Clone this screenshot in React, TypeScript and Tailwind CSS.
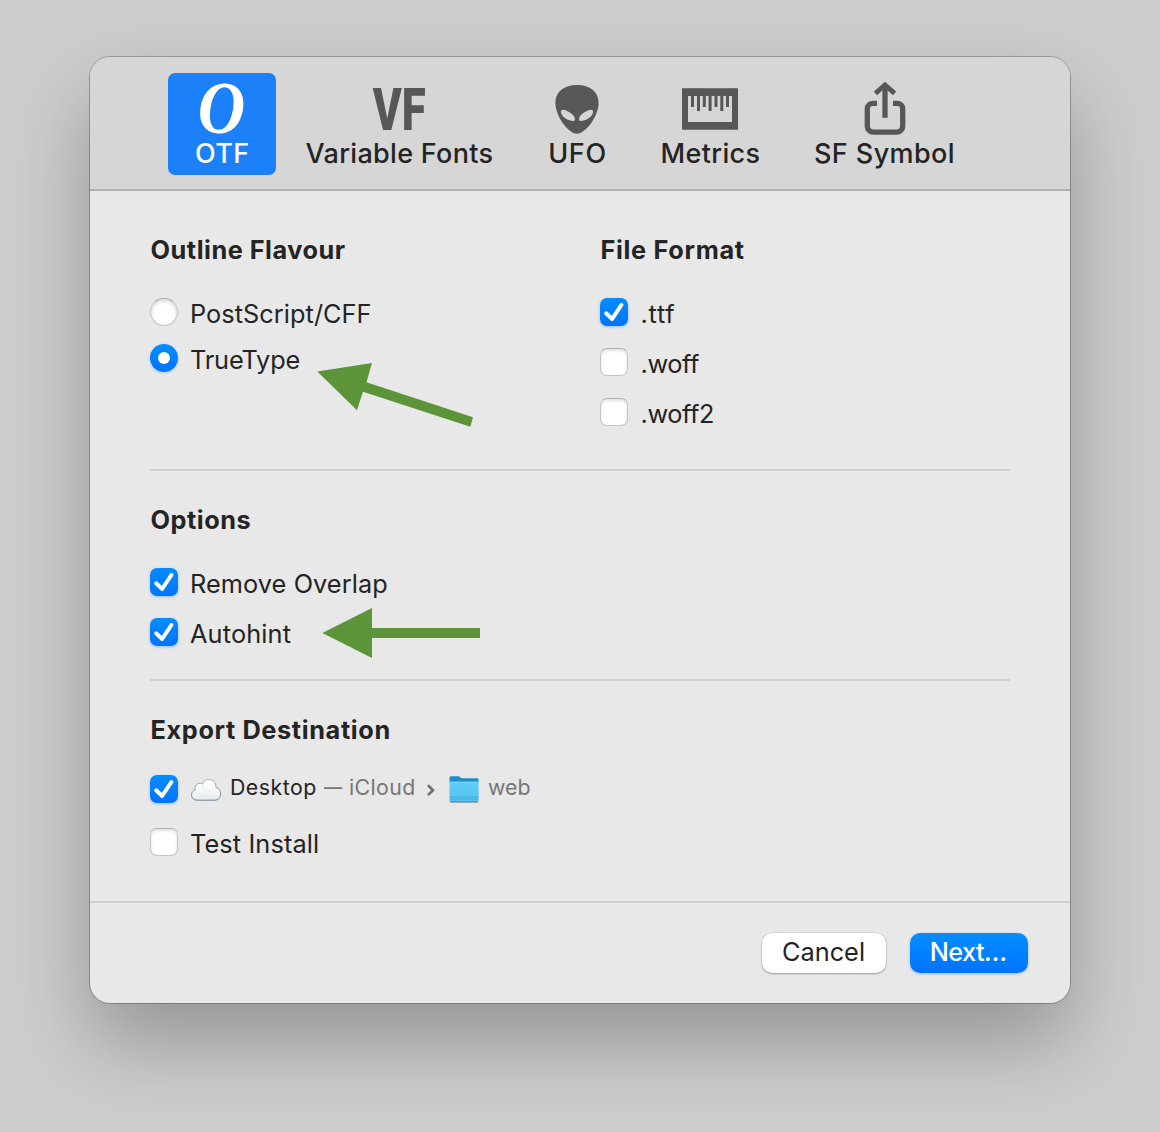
import React from "react";

function CheckMark() {
  return (
    <svg width="28" height="28" viewBox="0 0 28 28" fill="none">
      <path
        d="M6.2 15.3 L12.1 21 L21.4 7"
        stroke="#fff"
        strokeWidth="4"
        strokeLinecap="round"
        strokeLinejoin="round"
      />
    </svg>
  );
}

function Box({ checked = false }: { checked?: boolean }) {
  return checked ? (
    <span className="block h-7 w-7 shrink-0 rounded-[7px] bg-gradient-to-b from-[#078dff] to-[#0073fd] shadow-[0_1px_3px_rgba(0,110,255,0.35)]">
      <CheckMark />
    </span>
  ) : (
    <span className="block h-7 w-7 shrink-0 rounded-[7px] border border-[#c4c4c4] border-t-[#b0b0b0] bg-white shadow-[inset_0_2px_3px_rgba(0,0,0,0.12)]" />
  );
}

function Radio({ selected = false }: { selected?: boolean }) {
  return selected ? (
    <span className="flex h-7 w-7 shrink-0 items-center justify-center rounded-full bg-gradient-to-b from-[#078dff] to-[#0073fd] shadow-[0_1px_3px_rgba(0,110,255,0.3)]">
      <span className="h-3 w-3 rounded-full bg-white" />
    </span>
  ) : (
    <span className="block h-7 w-7 shrink-0 rounded-full border border-[#c4c4c4] border-t-[#a8a8a8] bg-white shadow-[inset_0_2px_4px_rgba(0,0,0,0.16)]" />
  );
}

function Row({ control, className = "", children }: { control: React.ReactNode; className?: string; children: React.ReactNode }) {
  return (
    <div className="flex h-8 items-start gap-3 whitespace-nowrap text-[25.3px] leading-8">
      {control}
      <span className={className}>{children}</span>
    </div>
  );
}

function Heading({ className = "", children }: { className?: string; children: React.ReactNode }) {
  return (
    <h2 className={`h-8 whitespace-nowrap pl-[0.5px] text-[25.3px] font-bold leading-8 ${className}`}>{children}</h2>
  );
}

function Tab({ width, label, className = "", children }: { width: string; label: string; className?: string; children: React.ReactNode }) {
  return (
    <div className={`flex h-[102px] flex-col items-center ${width}`}>
      <div className="flex h-[65px] items-start justify-center text-[#575757]">{children}</div>
      <div className={`h-8 whitespace-nowrap pl-px text-[27px] font-medium leading-8 ${className}`}>{label}</div>
    </div>
  );
}

function AlienIcon() {
  return (
    <svg className="mt-3" width="44" height="49" viewBox="0 0 44 49">
      <path
        fill="currentColor"
        fillRule="evenodd"
        d="M22 0C35 0 43.6 6.8 43.6 17.8C43.6 31.5 30.5 48.8 22 48.8C13.500 48.8 .4 31.5 .4 17.800C.4 6.800 9 0 22 0ZM6.200 25.600C4.800 27.800 8.700 35.700 18.600 36C20.600 36 20.300 32.800 18.400 30.600C15.600 27.400 8.200 23 6.200 25.600ZM37.800 25.600C35.800 23 28.400 27.400 25.600 30.600C23.700 32.800 23.400 36 25.400 36C35.300 35.700 39.200 27.800 37.800 25.600Z"
      />
    </svg>
  );
}

function RulerIcon() {
  return (
    <svg className="mt-[15px]" width="56" height="42" viewBox="0 0 56 42">
      <path fill="currentColor" fillRule="evenodd" d="M0 .3H56V41.7H0ZM6 8V34H50V8Z" />
      <path
        fill="currentColor"
        d="M9 7h3v12h-3ZM15 7h3v16h-3ZM20.800 7h3v12h-3ZM26.600 7h3v16h-3ZM32.500 7h3v12h-3ZM38.300 7h3v16h-3ZM44 7h3v12h-3Z"
      />
    </svg>
  );
}

function ShareIcon() {
  return (
    <svg className="ml-0.5 mt-2" width="44" height="56" viewBox="0 0 44 56" fill="none" stroke="currentColor">
      <path
        strokeWidth="5.300"
        d="M14 22.300H9.800A5.500 5.500 0 0 0 4.300 27.800V45.200A6 6 0 0 0 10.300 51.200H33.700A6 6 0 0 0 39.700 45.200V27.800A5.500 5.500 0 0 0 34.200 22.300H30"
      />
      <path strokeWidth="5.300" d="M22 36.800V5" />
      <path strokeWidth="4.800" d="M12.400 12.400L22 3.900L31.600 12.400" />
    </svg>
  );
}

function CloudIcon() {
  return (
    <svg width="32" height="24" viewBox="0 0 32 24">
      <defs>
        <linearGradient id="cloudFill" x1="0" y1="0" x2="0" y2="1">
          <stop offset="0" stopColor="#ffffff" />
          <stop offset=".5" stopColor="#f8fafb" />
          <stop offset="1" stopColor="#e3e8ec" />
        </linearGradient>
        <linearGradient id="cloudEdge" x1="0" y1="0" x2="0" y2="1">
          <stop offset="0" stopColor="#a9b0b8" />
          <stop offset="1" stopColor="#77818f" />
        </linearGradient>
      </defs>
      <path
        d="M7 22.200C3.600 22.200 1.500 19.900 1.500 16.900C1.500 14.300 3 12.400 5.200 11.800C4.400 8 6.900 4.900 10.400 5.400C11 5.400 11.600 5.700 12.200 6C13.300 3.300 15.600 1.500 18.600 1.500C22.900 1.500 25.900 4.700 26 9.400C28.900 10 30.700 12.600 30.700 15.800C30.700 19.500 28.300 22.200 24.600 22.200Z"
        fill="url(#cloudFill)"
        stroke="url(#cloudEdge)"
        strokeWidth="1"
      />
      <path d="M12.200 6.500C12 11 15 13.500 18.500 13.300C22.500 13.200 24.800 10.800 25.300 9" fill="none" stroke="#eaeef1" strokeWidth="1" />
    </svg>
  );
}

function FolderIcon() {
  return (
    <svg width="32" height="30" viewBox="0 0 32 30">
      <defs>
        <linearGradient id="folderFront" x1="0" y1="0" x2="0" y2="1">
          <stop offset="0" stopColor="#62cbf8" />
          <stop offset="1" stopColor="#56c2f1" />
        </linearGradient>
      </defs>
      <path d="M2.200 27.500H30V29H2.200Z" fill="#8f9aa0" opacity=".7" />
      <path d="M1.500 3.700Q1.500 2.300 2.900 2.300H10.400Q11.400 2.300 12.100 3L13.500 4.300H29.200Q30.600 4.300 30.600 5.700V9H1.500Z" fill="#1b8fc4" />
      <path d="M1.500 7.900H30.600V26.700Q30.600 28.100 29.200 28.100H2.900Q1.500 28.100 1.500 26.700Z" fill="url(#folderFront)" />
      <path d="M1.500 8H30.600" stroke="#86dcff" strokeWidth=".8" />
      <path d="M1.500 23.200H30.600M1.500 25.200H30.600" stroke="#3ea9d9" strokeWidth=".7" />
      <path d="M2 27.700H30" stroke="#2b8fc0" strokeWidth=".8" />
    </svg>
  );
}

export default function App() {
  return (
    <main className="flex h-[1132px] w-[1160px] items-start justify-center overflow-hidden bg-[#cdcdcd] pt-[57px] font-['Inter',sans-serif] text-[#242424]">
      <section className="relative flex h-[946px] w-[980px] flex-col rounded-[20px] bg-[#e8e8e8] shadow-[0_0_0_1px_rgba(0,0,0,0.24),0_40px_80px_rgba(0,0,0,0.27)]">
        <nav className="flex h-[134px] rounded-t-[20px] border-b-2 border-[#b2b2b2] bg-[#d6d6d6] pl-[78px] pt-4">
          <div className="mr-[0.5px] h-[102px] w-[107.5px] rounded-[7px] bg-[#1c80f8] text-white">
            <Tab width="w-[107.5px]" label="OTF" className="tracking-[0.4px]">
              <span className="mt-[9px] block scale-x-[0.900] font-['Liberation_Serif',serif] text-[73px] font-bold italic leading-[54px] text-white">O</span>
            </Tab>
          </div>
          <Tab width="w-[246px]" label="Variable Fonts" className="tracking-[0.310px]">
            <span className="mt-[10px] block scale-x-[0.730] font-['Roboto',sans-serif] text-[60px] font-black leading-[54px]">VF</span>
          </Tab>
          <Tab width="w-[110px]" label="UFO" className="tracking-[0.700px]">
            <AlienIcon />
          </Tab>
          <Tab width="w-[156px]" label="Metrics" className="tracking-[0.360px]">
            <RulerIcon />
          </Tab>
          <Tab width="w-[192px]" label="SF Symbol" className="tracking-[0.400px]">
            <ShareIcon />
          </Tab>
        </nav>

        <div className="mx-[60px] flex h-[280px] border-b-2 border-[#d0d0d0] pt-[43px]">
          <div className="w-[450px]">
            <Heading className="tracking-[0.520px]">Outline Flavour</Heading>
            <div className="mt-8 flex flex-col gap-3.5">
              <Row control={<Radio />} className="tracking-[0.060px]">PostScript/CFF</Row>
              <Row control={<Radio selected />} className="tracking-[-0.160px]">TrueType</Row>
            </div>
          </div>
          <div>
            <Heading className="tracking-[0.680px]">File Format</Heading>
            <div className="mt-8 flex flex-col gap-[18px]">
              <Row control={<Box checked />} className="pl-[0.5px] tracking-[0.750px]">.ttf</Row>
              <Row control={<Box />} className="pl-[0.5px] tracking-[-0.400px]">.woff</Row>
              <Row control={<Box />} className="pl-[0.5px] tracking-[-0.400px]">.woff2</Row>
            </div>
          </div>
        </div>

        <div className="mx-[60px] h-[210px] border-b-2 border-[#d0d0d0] pt-[33px]">
          <Heading className="tracking-[0.550px]">Options</Heading>
          <div className="mt-8 flex flex-col gap-[18px]">
            <Row control={<Box checked />} className="tracking-[0.080px]">Remove Overlap</Row>
            <Row control={<Box checked />} className="tracking-[0.150px]">Autohint</Row>
          </div>
        </div>

        <div className="h-[222px] border-b-2 border-[#d0d0d0] px-[60px] pt-[33px]">
          <Heading className="tracking-[0.630px]">Export Destination</Heading>
          <div className="mt-[27px] flex h-9 items-start whitespace-nowrap text-[21.3px] leading-7">
            <div className="mt-0.5"><Box checked /></div>
            <div className="ml-3 mt-[5px] w-8"><CloudIcon /></div>
            <span className="ml-2 w-[93.5px] tracking-[0.500px]">Desktop</span>
            <span className="w-[25.5px] origin-left scale-x-[0.850] text-[#767676]">—</span>
            <span className="w-[77px] tracking-[0.400px] text-[#767676]">iCloud</span>
            <svg className="mt-[10px]" width="10" height="14" viewBox="0 0 10 14" fill="none">
              <path d="M2 2.300L7 7.200L2 12.100" stroke="#6e6e6e" strokeWidth="2.600" />
            </svg>
            <div className="ml-3 mt-px w-8"><FolderIcon /></div>
            <span className="ml-2 text-[#767676]">web</span>
          </div>
          <div className="mt-[19px]">
            <Row control={<Box />} className="tracking-[0.120px]">Test Install</Row>
          </div>
        </div>

        <footer className="flex justify-end gap-6 pr-[42px] pt-[30px] text-[25.3px]">
          <button className="flex h-10 w-[124px] items-start justify-center rounded-[10px] bg-white pr-px leading-[38px] tracking-[0.030px] shadow-[0_0_0_0.500px_rgba(0,0,0,0.15),0_1px_2px_rgba(0,0,0,0.28)]">Cancel</button>
          <button className="flex h-10 w-[118px] items-start justify-center rounded-[10px] bg-gradient-to-b from-[#078dff] to-[#0073fd] pr-0.5 font-medium leading-[38px] tracking-[-0.600px] text-white shadow-[0_1px_3px_rgba(0,110,255,0.35)]">Next…</button>
        </footer>

        <svg className="absolute left-[227px] top-[305px]" width="158" height="66" viewBox="317 362 158 66">
          <path fill="#5c943a" d="M317.300 371.400L372 363L366.500 382.300L473 417.300L470.300 426.700L363 391.700L357 410.300Z" />
        </svg>
        <svg className="absolute left-[232px] top-[550px]" width="160" height="52" viewBox="322 607 160 52">
          <path fill="#5c943a" d="M322.300 633L372 608V628H480V638H372V658Z" />
        </svg>
      </section>
    </main>
  );
}
